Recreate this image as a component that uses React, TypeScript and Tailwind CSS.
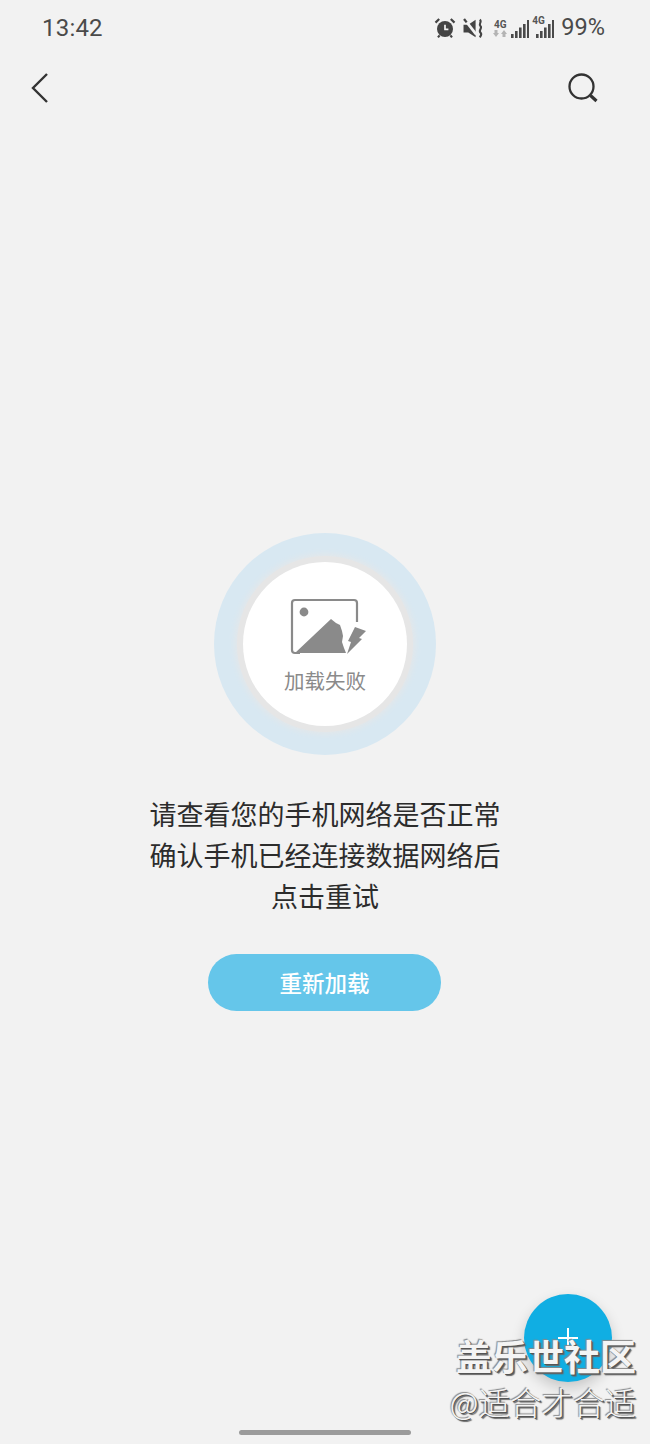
import React from "react";

const Bars = ({ className = "" }: { className?: string }) => (
  <svg width="18" height="20" viewBox="0 0 18 20" className={className} fill="#4a4a4a">
    <rect x="0" y="15" width="2.6" height="4" />
    <rect x="4" y="12" width="2.6" height="7" />
    <rect x="8" y="8.5" width="2.6" height="10.5" />
    <rect x="12" y="5" width="2.6" height="14" />
    <rect x="16" y="1" width="2.2" height="18" />
  </svg>
);

const Alarm = () => (
  <svg width="22" height="22" viewBox="0 0 22 22" fill="none">
    <circle cx="11" cy="12" r="8" fill="#444" />
    <path d="M11 7.8V12.4H14.4" stroke="#f2f2f2" strokeWidth="1.7" />
    <path d="M1.5 5.6 5.2 2M20.5 5.6 16.8 2" stroke="#444" strokeWidth="2.2" />
    <path d="M5.6 18.4 4 20.4M16.4 18.4 18 20.4" stroke="#444" strokeWidth="2.2" />
  </svg>
);

const Mute = () => (
  <svg width="21" height="21" viewBox="0 0 20 20" fill="none">
    <path d="M0.5 6.5H5L12 1.6V18.4L5 13.8H0.5Z" fill="#444" />
    <path d="M1.8 1.8 12.6 15.6" stroke="#f2f2f2" strokeWidth="2.6" />
    <path d="M1 1 3.5 4.2" stroke="#444" strokeWidth="2.2" />
    <path d="M16 1.5C18.6 3.6 14.4 5.4 16.6 7.6 18.8 9.6 14.4 11.6 16.6 13.8 18.4 15.6 17 17 16 18.4" stroke="#444" strokeWidth="2" />
  </svg>
);

const PictureIcon = () => (
  <svg width="76" height="58" viewBox="0 0 76 58" fill="none">
    <path d="M67 24V5a3 3 0 0 0-3-3H5a3 3 0 0 0-3 3v47a3 3 0 0 0 3 3h5" stroke="#8a8a8a" strokeWidth="2.2" />
    <circle cx="14" cy="14" r="4.4" fill="#8a8a8a" />
    <path d="M5 55 41 21 46 25 50 27 52 33 53 38 52 44 54 50 56 55Z" fill="#8a8a8a" />
    <path d="M65 29 76 33 69 40 72 41 57 56 61 44 58 43Z" fill="#8a8a8a" />
  </svg>
);

export default function App() {
  const font = "font-['Roboto','Noto_Sans_CJK_SC',sans-serif]";
  return (
    <div className={`relative flex h-[1444px] w-[650px] flex-col overflow-hidden bg-[#f2f2f2] font-['Noto_Sans_CJK_SC','Noto_Sans',sans-serif]`}>
      <div className="flex h-[56px] items-center justify-between pl-[42px] pr-[45px] text-[#4a4a4a]">
        <span className={`${font} text-[24px] tracking-[0.2px]`}>13:42</span>
        <div className="flex items-center">
          <Alarm />
          <span className="ml-[7px]"><Mute /></span>
          <div className="ml-[9px] flex flex-col items-center leading-none">
            <span className={`${font} text-[10px] font-bold leading-[11px] text-[#555]`}>4G</span>
            <svg width="14" height="7" viewBox="0 0 14 7" fill="#b4b4b4">
              <path d="M1.5 0H4.5V3H6L3 7 0 3H1.5ZM9.5 7H12.5V4H14L11 0 8 4H9.5Z" />
            </svg>
          </div>
          <Bars className="ml-[4px] mt-[1px]" />
          <div className="relative ml-[3px] h-[20px] w-[22px]">
            <Bars className="absolute bottom-[-1px] right-0" />
            <span className={`${font} absolute left-0 top-[-3px] bg-[#f2f2f2] text-[10px] font-bold leading-[11px] text-[#555]`}>4G</span>
          </div>
          <span className={`${font} ml-[7px] text-[23.5px]`}>99%</span>
        </div>
      </div>

      <div className="flex h-[64px] items-center justify-between pl-[30px] pr-[51px]">
        <svg width="19" height="32" viewBox="0 0 19 32" fill="none">
          <path d="M17 2 3 16 17 30" stroke="#333" strokeWidth="2.4" />
        </svg>
        <svg width="32" height="32" viewBox="0 0 32 32" fill="none">
          <circle cx="14.5" cy="14.5" r="12" stroke="#333" strokeWidth="2.3" />
          <path d="M23.5 23.5 29.5 29" stroke="#333" strokeWidth="3.2" />
        </svg>
      </div>

      <div className="flex flex-col items-center pt-[413px]">
        <div className="flex h-[222px] w-[222px] items-center justify-center rounded-full bg-[#d8e8f2]">
          <div className="flex h-[176px] w-[176px] items-center justify-center rounded-full bg-[#e6e6e6] shadow-[0_0_6px_2px_#e4e7e9]">
            <div className="flex h-[164px] w-[164px] flex-col items-center rounded-full bg-white pt-[36px]">
              <span className="ml-[6px] flex"><PictureIcon /></span>
              <span className="mt-[9px] text-[20.5px] leading-[30px] text-[#8a8a8a]">加载失败</span>
            </div>
          </div>
        </div>

        <div className="mt-[38px] text-center text-[27px] font-normal leading-[41px] text-[#2c2c2c]">
          <p>请查看您的手机网络是否正常</p>
          <p>确认手机已经连接数据网络后</p>
          <p>点击重试</p>
        </div>

        <button className="mr-[1px] mt-[38px] flex h-[57px] w-[233px] items-center justify-center rounded-full bg-[#65c6ea] text-[22.5px] font-medium text-white">
          重新加载
        </button>
      </div>

      <div className="absolute left-[524px] top-[1294px] flex h-[88px] w-[88px] items-center justify-center rounded-full bg-[#10aee3] shadow-[0_6px_14px_rgba(0,0,0,0.18)]">
        <svg width="20" height="20" viewBox="0 0 20 20" stroke="#fff" strokeWidth="2">
          <path d="M10 0V20M0 10H20" />
        </svg>
      </div>

      <div className="absolute right-[14px] top-[1333px] flex flex-col items-end text-[#f4f4f4] [text-shadow:1px_1px_0_#555,2px_2px_1px_#666,-1px_-1px_1px_#888]">
        <span className="text-[36px] font-bold leading-[44px]">盖乐世社区</span>
        <span className="mt-[2px] text-[31.5px] font-light leading-[44px]">@适合才合适</span>
      </div>

      <div className="absolute bottom-[9px] left-[239px] h-[5px] w-[172px] rounded-full bg-[#9b9b9b]" />
    </div>
  );
}
